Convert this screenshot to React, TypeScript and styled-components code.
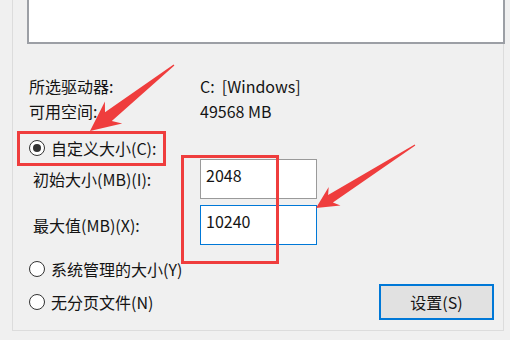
import React from "react";
import styled, { createGlobalStyle } from "styled-components";

const GlobalStyle = createGlobalStyle`
	html, body {
		margin: 0;
		padding: 0;
		background: #f0f0f0;
	}
	body {
		font-family: "Noto Sans CJK SC", "Noto Sans", sans-serif;
		color: #141414;
	}
`;

const Screen = styled.div`
	position: relative;
	width: 510px;
	height: 340px;
	overflow: hidden;
	background: #f0f0f0;
	font-size: 16px;
`;

const GroupBox = styled.div`
	margin-left: 12px;
	width: 492px;
	height: 331px;
	box-sizing: border-box;
	border: 1px solid #dcdcdc;
	border-top: none;
	padding-bottom: 10px;
	display: flex;
	flex-direction: column;
`;

const DriveList = styled.div`
	margin-left: 14px;
	margin-right: -2px;
	height: 44px;
	box-sizing: border-box;
	background: #ffffff;
	border: 2px solid #9c9fa5;
	border-top: none;
`;

const InfoGrid = styled.div`
	margin-top: 30px;
	padding-left: 16px;
	display: grid;
	grid-template-columns: 171px auto;
	grid-auto-rows: 25px;
	align-items: center;
	line-height: 25px;
`;

const RadioRow = styled.label<{ $top: number }>`
	margin-top: ${({ $top }) => $top}px;
	padding-left: 16px;
	height: 22px;
	display: flex;
	align-items: center;
	gap: 6px;
	line-height: 22px;
`;

const RadioDot = styled.span<{ $checked?: boolean }>`
	width: 16px;
	height: 16px;
	box-sizing: border-box;
	border-radius: 50%;
	border: 1px solid #333333;
	background: #ffffff;
	display: flex;
	align-items: center;
	justify-content: center;
	flex-shrink: 0;

	&::after {
		content: "";
		width: 8px;
		height: 8px;
		border-radius: 50%;
		background: #333333;
		display: ${({ $checked }) => ($checked ? "block" : "none")};
	}
`;

const FieldRow = styled.div<{ $top: number }>`
	margin-top: ${({ $top }) => $top}px;
	padding-left: 20px;
	display: grid;
	grid-template-columns: 167px 117px;
	align-items: center;
	height: 40px;
`;

const TextBox = styled.div<{ $focused?: boolean }>`
	height: 40px;
	box-sizing: border-box;
	background: #ffffff;
	border: 1px solid ${({ $focused }) => ($focused ? "#0078d7" : "#9a9a9a")};
	padding: 5px 0 0 5px;
	line-height: 20px;
	font-size: 16px;
`;

const BottomRow = styled.div`
	margin-top: 4px;
	display: flex;
	align-items: center;
	justify-content: space-between;
	padding-right: 9px;
	height: 36px;
`;

const SetButton = styled.button`
	width: 115px;
	height: 36px;
	box-sizing: border-box;
	border: 2px solid #0078d7;
	background: #e1e1e1;
	font-family: inherit;
	font-size: 16px;
	color: #141414;
	padding: 0;
`;

const Marks = styled.svg`
	position: absolute;
	left: 0;
	top: 0;
	pointer-events: none;
`;

type Pt = [number, number];

function arrowPoints(tip: Pt, tail: Pt, headLen: number, headHalf: number, neckHalf: number): string {
	const dx = tail[0] - tip[0];
	const dy = tail[1] - tip[1];
	const len = Math.hypot(dx, dy);
	const ux = dx / len;
	const uy = dy / len;
	const nx = -uy;
	const ny = ux;
	const base: Pt = [tip[0] + ux * headLen, tip[1] + uy * headLen];
	const neck: Pt = [tip[0] + ux * headLen * 0.78, tip[1] + uy * headLen * 0.78];
	const pts: Pt[] = [
		tip,
		[base[0] + nx * headHalf, base[1] + ny * headHalf],
		[neck[0] + nx * neckHalf, neck[1] + ny * neckHalf],
		[tail[0] + nx * 0.6, tail[1] + ny * 0.6],
		[tail[0] - nx * 0.6, tail[1] - ny * 0.6],
		[neck[0] - nx * neckHalf, neck[1] - ny * neckHalf],
		[base[0] - nx * headHalf, base[1] - ny * headHalf],
	];
	return pts.map((p) => `${p[0].toFixed(1)},${p[1].toFixed(1)}`).join(" ");
}

function Annotations() {
	const red = "#ef3d3d";
	return (
		<Marks width={510} height={340} viewBox="0 0 510 340">
			<rect x={18.5} y={132.5} width={146} height={32} fill="none" stroke={red} strokeWidth={3} />
			<rect x={182.5} y={156.5} width={95} height={106} fill="none" stroke={red} strokeWidth={3} />
			<polygon points={arrowPoints([90, 131], [174, 65], 30, 14, 5.5)} fill={red} />
			<polygon points={arrowPoints([316, 208], [415, 145], 22, 11, 4.5)} fill={red} />
		</Marks>
	);
}

export default function App() {
	return (
		<Screen>
			<GlobalStyle />
			<GroupBox>
				<DriveList />
				<InfoGrid>
					<span>所选驱动器:</span>
					<span>C:&nbsp;&nbsp;[Windows]</span>
					<span>可用空间:</span>
					<span>49568 MB</span>
				</InfoGrid>
				<RadioRow $top={13}>
					<RadioDot $checked />
					自定义大小(C):
				</RadioRow>
				<FieldRow $top={0}>
					<span>初始大小(MB)(I):</span>
					<TextBox>2048</TextBox>
				</FieldRow>
				<FieldRow $top={6}>
					<span>最大值(MB)(X):</span>
					<TextBox $focused>10240</TextBox>
				</FieldRow>
				<RadioRow $top={13}>
					<RadioDot />
					系统管理的大小(Y)
				</RadioRow>
				<BottomRow>
					<RadioRow $top={0}>
						<RadioDot />
						无分页文件(N)
					</RadioRow>
					<SetButton>设置(S)</SetButton>
				</BottomRow>
			</GroupBox>
			<Annotations />
		</Screen>
	);
}
